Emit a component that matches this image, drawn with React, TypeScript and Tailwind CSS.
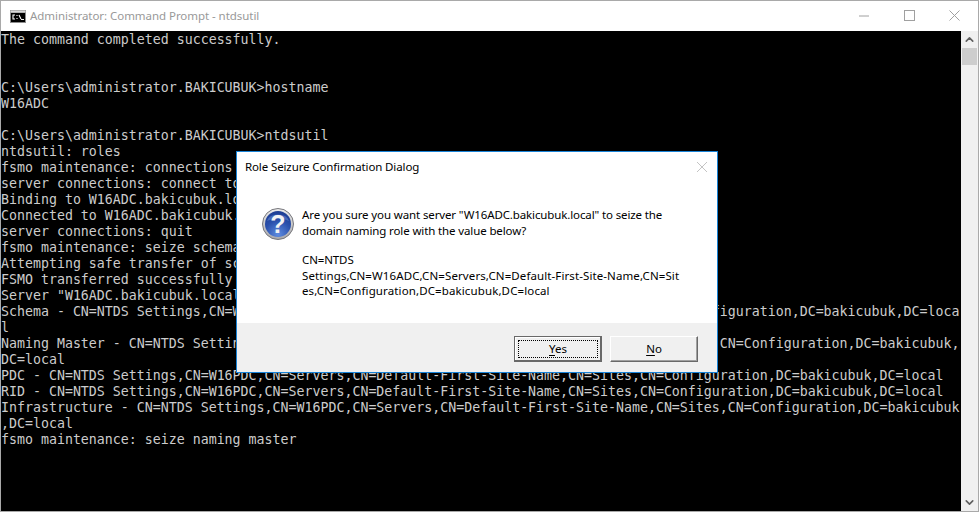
import { ChevronDown, ChevronUp } from "lucide-react"

const lines = [
  "The command completed successfully.",
  "",
  "",
  "C:\\Users\\administrator.BAKICUBUK>hostname",
  "W16ADC",
  "",
  "C:\\Users\\administrator.BAKICUBUK>ntdsutil",
  "ntdsutil: roles",
  "fsmo maintenance: connections",
  "server connections: connect to server W16ADC",
  "Binding to W16ADC.bakicubuk.local ...",
  "Connected to W16ADC.bakicubuk.local using credentials of locally logged on user.",
  "server connections: quit",
  "fsmo maintenance: seize schema master",
  "Attempting safe transfer of schema FSMO before seizure.",
  "FSMO transferred successfully - seizure not required.",
  "Server \"W16ADC.bakicubuk.local\" knows about 5 roles",
  "Schema - CN=NTDS Settings,CN=W16ADC,CN=Servers,CN=Default-First-Site-Name,CN=Sites,CN=Configuration,DC=bakicubuk,DC=loca",
  "l",
  "Naming Master - CN=NTDS Settings,CN=W16PDC,CN=Servers,CN=Default-First-Site-Name,CN=Sites,CN=Configuration,DC=bakicubuk,",
  "DC=local",
  "PDC - CN=NTDS Settings,CN=W16PDC,CN=Servers,CN=Default-First-Site-Name,CN=Sites,CN=Configuration,DC=bakicubuk,DC=local",
  "RID - CN=NTDS Settings,CN=W16PDC,CN=Servers,CN=Default-First-Site-Name,CN=Sites,CN=Configuration,DC=bakicubuk,DC=local",
  "Infrastructure - CN=NTDS Settings,CN=W16PDC,CN=Servers,CN=Default-First-Site-Name,CN=Sites,CN=Configuration,DC=bakicubuk",
  ",DC=local",
  "fsmo maintenance: seize naming master",
]

function CmdIcon() {
  return (
    <svg width="16" height="13" viewBox="0 0 16 13" className="shrink-0">
      <rect x="0" y="0" width="16" height="13" fill="#8c8c8c" />
      <rect x="0.5" y="0.5" width="15" height="2" fill="#d8d8d8" />
      <rect x="1" y="3" width="14" height="9" fill="#000" />
      <path d="M5 5H3v4h2M7 5v1M7 8v1M9 5l2 4" stroke="#fff" strokeWidth="1.1" fill="none" />
      <path d="M11 9.5h3" stroke="#eee" strokeWidth="1" />
    </svg>
  )
}

function QuestionIcon() {
  return (
    <svg width="32" height="32" viewBox="0 0 32 32">
      <defs>
        <linearGradient id="rim" x1="0" y1="0" x2="0" y2="1">
          <stop offset="0" stopColor="#ececec" />
          <stop offset="1" stopColor="#a8a8ac" />
        </linearGradient>
        <radialGradient id="ball" cx="0.5" cy="0.9" r="0.95">
          <stop offset="0" stopColor="#5f8ce0" />
          <stop offset="0.55" stopColor="#2a50ac" />
          <stop offset="1" stopColor="#1b3a8e" />
        </radialGradient>
      </defs>
      <circle cx="16" cy="16" r="15.5" fill="url(#rim)" stroke="#77777c" strokeWidth="1" />
      <circle cx="16" cy="16" r="13" fill="url(#ball)" />
      <path d="M5 13a11.5 9 0 0 1 22 0c-6-3-15-3-22 0z" fill="#7d9fe0" opacity="0.4" />
      <text x="16" y="25" textAnchor="middle" fontFamily="'Liberation Sans', sans-serif" fontWeight="700" fontSize="25" fill="#f3f3f3">
        ?
      </text>
    </svg>
  )
}

function DefaultButton({ label, rest }: { label: string; rest: string }) {
  return (
    <div className="flex h-[26px] w-[88px] border-t border-l border-r-2 border-b-2 border-[#696969] bg-[#f0f0f0]">
      <div className="flex flex-1 border-t border-l border-t-white border-l-white p-[2px]">
        <div className="flex flex-1 items-center justify-center border border-dotted border-black">
          <span><span className="underline underline-offset-2">{label}</span>{rest}</span>
        </div>
      </div>
    </div>
  )
}

function DialogButton({ label, rest }: { label: string; rest: string }) {
  return (
    <div className="flex h-[26px] w-[88px] items-center justify-center border border-t-white border-l-white border-r-[#696969] border-b-[#696969] bg-[#f0f0f0] shadow-[inset_-1px_-1px_0_#a0a0a0]">
      <span><span className="underline underline-offset-2">{label}</span>{rest}</span>
    </div>
  )
}

export default function App() {
  return (
    <div className="relative flex h-[512px] w-[979px] flex-col overflow-hidden border border-[#a9a9a9] bg-white font-['Noto_Sans',sans-serif]">
      {/* title bar */}
      <div className="flex h-[30px] shrink-0 items-center bg-white">
        <div className="ml-[9px] flex items-center gap-[4px]">
          <CmdIcon />
          <span className="text-[11.5px] tracking-[-0.05px] text-[#999999]">Administrator: Command Prompt - ntdsutil</span>
        </div>
        <div className="ml-auto flex items-center">
          <svg width="46" height="30" viewBox="0 0 46 30"><path d="M18 15h10" stroke="#a0a0a0" strokeWidth="1" /></svg>
          <svg width="46" height="30" viewBox="0 0 46 30"><rect x="17.5" y="9.5" width="10" height="10" fill="none" stroke="#a0a0a0" strokeWidth="1" /></svg>
          <svg width="44" height="30" viewBox="0 0 44 30" className="mr-[1px]"><path d="M16.5 9.5l10 10M26.5 9.5l-10 10" stroke="#a0a0a0" strokeWidth="1" /></svg>
        </div>
      </div>

      {/* console */}
      <div className="flex flex-1 overflow-hidden">
        <div className="w-[960px] overflow-hidden bg-black pt-[1px] font-['DejaVu_Sans_Mono',monospace] text-[13.28px] leading-4 text-[#cccccc]">
          {lines.map((line, i) => (
            <div key={i} className="h-4 whitespace-pre">{line}</div>
          ))}
        </div>
        <div className="flex w-[17px] flex-col items-center bg-[#f0f0f0] text-[#606060]">
          <div className="flex h-[17px] items-center justify-center"><ChevronUp size={13} strokeWidth={3} /></div>
          <div className="h-[17px] w-[15px] bg-[#cdcdcd]" />
          <div className="mt-auto flex h-[17px] items-center justify-center"><ChevronDown size={13} strokeWidth={3} /></div>
        </div>
      </div>

      {/* dialog */}
      <div className="absolute left-[235px] top-[150px] flex h-[222px] w-[482px] flex-col border border-[#1883d7] bg-white text-[11.5px] text-black">
        <div className="flex h-[30px] shrink-0 items-center pl-[8px] pr-[9px]">
          <span className="tracking-[-0.12px]">Role Seizure Confirmation Dialog</span>
          <svg width="12" height="12" viewBox="0 0 12 12" className="ml-auto"><path d="M1 1l10 10M11 1L1 11" stroke="#c4c4c4" strokeWidth="1" /></svg>
        </div>
        <div className="flex flex-1 gap-[8px] pl-[25px] pt-[26px]">
          <div className="shrink-0"><QuestionIcon /></div>
          <div className="-mt-[1px] w-[390px] whitespace-pre leading-[15.5px] tracking-[-0.12px]">
            <p>Are you sure you want server "W16ADC.bakicubuk.local" to seize the</p>
            <p>domain naming role with the value below?</p>
            <p className="mt-[14px]">CN=NTDS</p>
            <p className="tracking-[0.1px]">Settings,CN=W16ADC,CN=Servers,CN=Default-First-Site-Name,CN=Sit</p>
            <p className="tracking-[0.12px]">es,CN=Configuration,DC=bakicubuk,DC=local</p>
          </div>
        </div>
        <div className="flex h-[49px] shrink-0 items-center justify-end gap-[8px] bg-[#f0f0f0] pr-[19px] pt-[3px]">
          <DefaultButton label="Y" rest="es" />
          <DialogButton label="N" rest="o" />
        </div>
      </div>
    </div>
  )
}
